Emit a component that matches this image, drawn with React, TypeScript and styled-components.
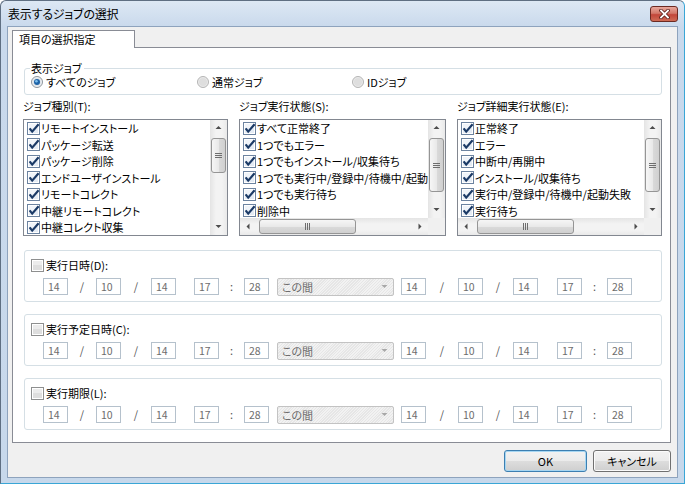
import styled, { createGlobalStyle } from 'styled-components'

const GlobalStyle = createGlobalStyle`
  html, body {
    margin: 0;
    padding: 0;
    background: #ffffff;
  }
  body {
    font-family: "Noto Sans CJK JP", "Liberation Sans", sans-serif;
    font-size: 11px;
    color: #000;
    font-feature-settings: "palt";
  }
  * {
    box-sizing: border-box;
  }
`

const Window = styled.div`
  width: 685px;
  height: 484px;
  display: flex;
  flex-direction: column;
  background: linear-gradient(180deg, #dde8f4 0%, #c9d9ec 26px, #c7d8eb 100%);
  border: 1px solid #5f6f82;
  border-right-color: #3aa6d6;
  border-bottom-color: #3aa6d6;
  border-radius: 6px 6px 0 0;
  padding: 0 6px 5px 6px;
`

const TitleBar = styled.div`
  height: 25px;
  flex: none;
  display: flex;
  justify-content: space-between;
  align-items: flex-start;
  padding-left: 1px;
`

const Title = styled.span`
  font-size: 12px;
  line-height: 25px;
  letter-spacing: -0.2px;
`

const CloseButton = styled.div`
  margin-top: 5px;
  width: 28px;
  height: 16px;
  border: 1px solid #6b2a22;
  border-radius: 3px;
  background: linear-gradient(180deg, #e8a89c 0%, #d3786a 45%, #c2463a 55%, #cf6b55 100%);
  display: flex;
  align-items: center;
  justify-content: center;
`

const Client = styled.div`
  flex: 1;
  display: flex;
  flex-direction: column;
  background: #f0f0f0;
  border: 1px solid #8ea3bd;
  padding: 3px 6px 5px 4px;
`

const TabHeader = styled.div`
  width: 123px;
  height: 18px;
  flex: none;
  background: #ffffff;
  border: 1px solid #898c95;
  border-bottom: none;
  margin-bottom: -1px;
  position: relative;
  z-index: 1;
  padding-left: 6px;
  line-height: 17px;
`

const TabPanel = styled.div`
  flex: 1;
  background: #ffffff;
  border: 1px solid #898c95;
  padding: 0 8px 0 10px;
  display: flex;
  flex-direction: column;
`

const GroupFieldset = styled.fieldset`
  margin: 13px 0 0 1px;
  height: 34px;
  border: 1px solid #d5dfe5;
  border-radius: 3px;
  padding: 0 6px 0 5px;
  min-width: 0;
`

const Legend = styled.legend`
  padding: 0 2px 0 1px;
  line-height: 14px;
  height: 14px;
`

const RadioRow = styled.div`
  display: flex;
  align-items: center;
  height: 14px;
  margin-left: 1px;
`

const RadioItem = styled.label<{ $w?: number }>`
  display: flex;
  align-items: center;
  gap: 3px;
  width: ${(p) => (p.$w ? `${p.$w}px` : 'auto')};
  line-height: 14px;
`

const ListsGrid = styled.div`
  display: grid;
  grid-template-columns: 205px 207px 205px;
  column-gap: 11px;
  margin-top: 5px;
`

const ListColumn = styled.div`
  display: flex;
  flex-direction: column;
`

const ListLabel = styled.div`
  height: 13px;
  line-height: 13px;
  margin-bottom: 6px;
`

const ListBox = styled.div<{ $hscroll?: boolean }>`
  height: 117px;
  border: 1px solid #828790;
  background: #ffffff;
  display: grid;
  grid-template-columns: minmax(0, 1fr) 17px;
  grid-template-rows: ${(p) => (p.$hscroll ? 'minmax(0, 1fr) 17px' : 'minmax(0, 1fr)')};
  overflow: hidden;
`

const Items = styled.div`
  overflow: hidden;
  padding-left: 3px;
`

const Item = styled.div`
  height: 16.5px;
  display: flex;
  align-items: center;
  gap: 1px;
  white-space: nowrap;
  line-height: 16px;
`

const VScroll = styled.div`
  display: flex;
  flex-direction: column;
  background: linear-gradient(90deg, #e4e4e4 0%, #f3f3f3 35%, #f3f3f3 70%, #e9e9e9 100%);
`

const HScroll = styled.div`
  display: flex;
  background: linear-gradient(180deg, #e4e4e4 0%, #f3f3f3 35%, #f3f3f3 70%, #e9e9e9 100%);
`

const Corner = styled.div`
  background: #f0f0f0;
`

const ArrowBtn = styled.div`
  width: 17px;
  height: 17px;
  flex: none;
  display: flex;
  align-items: center;
  justify-content: center;
`

const VTrack = styled.div`
  flex: 1;
  display: flex;
  flex-direction: column;
  padding: 0 1px;
`

const HTrack = styled.div`
  flex: 1;
  display: flex;
  padding: 1px 0;
`

const VThumb = styled.div<{ $offset: number; $size: number }>`
  margin-top: ${(p) => p.$offset}px;
  height: ${(p) => p.$size}px;
  border: 1px solid #959595;
  border-radius: 3px;
  background: linear-gradient(90deg, #f6f6f6 0%, #e9e9e9 50%, #dadada 51%, #d0d0d0 100%);
  display: flex;
  align-items: center;
  justify-content: center;
`

const HThumb = styled.div<{ $offset: number; $size: number }>`
  margin-left: ${(p) => p.$offset}px;
  width: ${(p) => p.$size}px;
  border: 1px solid #959595;
  border-radius: 3px;
  background: linear-gradient(180deg, #f6f6f6 0%, #e9e9e9 50%, #dadada 51%, #d0d0d0 100%);
  display: flex;
  align-items: center;
  justify-content: center;
`

const DateGroup = styled.div<{ $first?: boolean }>`
  margin: ${(p) => (p.$first ? '14px' : '12px')} 0 0 1px;
  height: 52px;
  border: 1px solid #d5dfe5;
  border-radius: 3px;
  padding: 7px 6px 0 6px;
`

const CheckLabel = styled.label`
  display: flex;
  align-items: center;
  gap: 2px;
  height: 14px;
  line-height: 14px;
`

const DateRow = styled.div`
  display: flex;
  align-items: center;
  margin: 6px 0 0 12px;
  height: 17px;
`

const Field = styled.div`
  width: 25px;
  height: 17px;
  flex: none;
  border: 1px solid #b5c1cc;
  background: #ffffff;
  color: #6d6d6d;
  padding-left: 4px;
  line-height: 15px;
  font-size: 10.5px;
`

const Sep = styled.span<{ $w: number }>`
  width: ${(p) => p.$w}px;
  flex: none;
  text-align: center;
  color: #555;
  line-height: 17px;
`

const Combo = styled.div`
  width: 117px;
  height: 18px;
  flex: none;
  margin: 0 7px 0 8px;
  border: 1px solid #c3c3c3;
  border-radius: 2px;
  background: repeating-linear-gradient(135deg, #f2f2f2 0px, #f2f2f2 1px, #e6e6e6 1px, #e6e6e6 2px);
  color: #6d6d6d;
  display: flex;
  align-items: center;
  justify-content: space-between;
  padding: 0 5px 0 4px;
  line-height: 16px;
`

const Footer = styled.div`
  flex: none;
  display: flex;
  justify-content: flex-end;
  gap: 6px;
  margin-top: 7px;
  padding-right: 0;
`

const Button = styled.div<{ $default?: boolean; $w: number }>`
  width: ${(p) => p.$w}px;
  height: 22px;
  border: 1px solid ${(p) => (p.$default ? '#3c7fb1' : '#707070')};
  border-radius: 3px;
  background: linear-gradient(180deg, #f2f2f2 0%, #ebebeb 50%, #dddddd 51%, #cfcfcf 100%);
  box-shadow: inset 0 0 0 1px ${(p) => (p.$default ? '#a6d6f2' : '#fbfbfb')};
  display: flex;
  align-items: center;
  justify-content: center;
  line-height: 20px;
`

function CheckBox({ checked }: { checked?: boolean }) {
  return (
    <svg width="13" height="13" viewBox="0 0 13 13" style={{ flex: 'none' }}>
      <rect x="0.5" y="0.5" width="12" height="12" fill="#ffffff" stroke={checked ? '#6c83a0' : '#8e8f8f'} />
      <rect x="2" y="2" width="9" height="9" fill={checked ? '#e4ebf4' : '#dedede'} />
      <rect x="2" y="2" width="9" height="4" fill={checked ? '#f0f4f9' : '#ececec'} />
      {checked && (
        <path d="M2.6 6.4 L5.2 9.6 L11.6 2.2" fill="none" stroke="#1b3a66" strokeWidth="2.2" strokeLinejoin="miter" />
      )}
    </svg>
  )
}

function Radio({ selected }: { selected?: boolean }) {
  return (
    <svg width="12" height="12" viewBox="0 0 12 12" style={{ flex: 'none' }}>
      <circle cx="6" cy="6" r="5.5" fill={selected ? '#eef1f4' : '#ebebeb'} stroke={selected ? '#8e959c' : '#b4b4b4'} />
      <circle cx="6" cy="6" r="4" fill={selected ? '#dfe3e8' : '#dedede'} />
      {selected && (
        <>
          <circle cx="6" cy="6" r="3" fill="#1d63a8" />
          <circle cx="5.4" cy="5.3" r="1.3" fill="#7fc1ef" />
        </>
      )}
    </svg>
  )
}

function Arrow({ dir, color = '#4d4d4d' }: { dir: 'up' | 'down' | 'left' | 'right'; color?: string }) {
  const d = {
    up: 'M0.5 4 L3.5 1 L6.5 4 Z',
    down: 'M0.5 2 L3.5 5 L6.5 2 Z',
    left: 'M4.5 0.5 L1.5 3.5 L4.5 6.5 Z',
    right: 'M2.5 0.5 L5.5 3.5 L2.5 6.5 Z',
  }[dir]
  return (
    <svg width="7" height="7" viewBox="0 0 7 7">
      <path d={d} fill={color} />
    </svg>
  )
}

function Grip({ vertical }: { vertical?: boolean }) {
  return vertical ? (
    <svg width="7" height="7" viewBox="0 0 7 7">
      <path d="M0 1.5 H7 M0 3.5 H7 M0 5.5 H7" stroke="#6e6e6e" strokeWidth="1" />
    </svg>
  ) : (
    <svg width="7" height="7" viewBox="0 0 7 7">
      <path d="M1.5 0 V7 M3.5 0 V7 M5.5 0 V7" stroke="#6e6e6e" strokeWidth="1" />
    </svg>
  )
}

function VerticalScrollbar({ offset, size }: { offset: number; size: number }) {
  return (
    <VScroll>
      <ArrowBtn>
        <Arrow dir="up" />
      </ArrowBtn>
      <VTrack>
        <VThumb $offset={offset} $size={size}>
          <Grip vertical />
        </VThumb>
      </VTrack>
      <ArrowBtn>
        <Arrow dir="down" />
      </ArrowBtn>
    </VScroll>
  )
}

function JobList({ items, hscroll, thumb }: { items: string[]; hscroll?: boolean; thumb: [number, number] }) {
  return (
    <ListBox $hscroll={hscroll}>
      <Items>
        {items.map((label) => (
          <Item key={label}>
            <CheckBox checked />
            {label}
          </Item>
        ))}
      </Items>
      <VerticalScrollbar offset={thumb[0]} size={thumb[1]} />
      {hscroll && (
        <>
          <HScroll>
            <ArrowBtn>
              <Arrow dir="left" />
            </ArrowBtn>
            <HTrack>
              <HThumb $offset={2} $size={97}>
                <Grip />
              </HThumb>
            </HTrack>
            <ArrowBtn>
              <Arrow dir="right" />
            </ArrowBtn>
          </HScroll>
          <Corner />
        </>
      )}
    </ListBox>
  )
}

function DateFilter({ label, first }: { label: string; first?: boolean }) {
  return (
    <DateGroup $first={first}>
      <CheckLabel>
        <CheckBox />
        {label}
      </CheckLabel>
      <DateRow>
        <Field>14</Field>
        <Sep $w={28}>/</Sep>
        <Field>10</Field>
        <Sep $w={30}>/</Sep>
        <Field>14</Field>
        <Sep $w={18} />
        <Field>17</Field>
        <Sep $w={25}>:</Sep>
        <Field>28</Field>
        <Combo>
          この間
          <Arrow dir="down" color="#a8a8a8" />
        </Combo>
        <Field>14</Field>
        <Sep $w={32}>/</Sep>
        <Field>10</Field>
        <Sep $w={30}>/</Sep>
        <Field>14</Field>
        <Sep $w={19} />
        <Field>17</Field>
        <Sep $w={25}>:</Sep>
        <Field>28</Field>
      </DateRow>
    </DateGroup>
  )
}

const jobTypes = [
  'リモートインストール',
  'パッケージ転送',
  'パッケージ削除',
  'エンドユーザインストール',
  'リモートコレクト',
  '中継リモートコレクト',
  '中継コレクト収集',
]

const jobStates = [
  'すべて正常終了',
  '1つでもエラー',
  '1つでもインストール/収集待ち',
  '1つでも実行中/登録中/待機中/起動失敗',
  '1つでも実行待ち',
  '削除中',
]

const detailStates = [
  '正常終了',
  'エラー',
  '中断中/再開中',
  'インストール/収集待ち',
  '実行中/登録中/待機中/起動失敗',
  '実行待ち',
]

export default function App() {
  return (
    <>
      <GlobalStyle />
      <Window>
        <TitleBar>
          <Title>表示するジョブの選択</Title>
          <CloseButton>
            <svg width="11" height="10" viewBox="0 0 11 10">
              <path d="M2 1.5 L9 8.5 M9 1.5 L2 8.5" stroke="#5a1d16" strokeWidth="3.4" strokeLinecap="square" />
              <path d="M2 1.5 L9 8.5 M9 1.5 L2 8.5" stroke="#ffffff" strokeWidth="1.8" strokeLinecap="square" />
            </svg>
          </CloseButton>
        </TitleBar>
        <Client>
          <TabHeader>項目の選択指定</TabHeader>
          <TabPanel>
            <GroupFieldset>
              <Legend>表示ジョブ</Legend>
              <RadioRow>
                <RadioItem $w={166}>
                  <Radio selected />
                  すべてのジョブ
                </RadioItem>
                <RadioItem $w={155}>
                  <Radio />
                  通常ジョブ
                </RadioItem>
                <RadioItem>
                  <Radio />
                  IDジョブ
                </RadioItem>
              </RadioRow>
            </GroupFieldset>
            <ListsGrid>
              <ListColumn>
                <ListLabel>ジョブ種別(T):</ListLabel>
                <JobList items={jobTypes} thumb={[1, 35]} />
              </ListColumn>
              <ListColumn>
                <ListLabel>ジョブ実行状態(S):</ListLabel>
                <JobList items={jobStates} hscroll thumb={[1, 54]} />
              </ListColumn>
              <ListColumn>
                <ListLabel>ジョブ詳細実行状態(E):</ListLabel>
                <JobList items={detailStates} hscroll thumb={[1, 54]} />
              </ListColumn>
            </ListsGrid>
            <DateFilter label="実行日時(D):" first />
            <DateFilter label="実行予定日時(C):" />
            <DateFilter label="実行期限(L):" />
          </TabPanel>
          <Footer>
            <Button $default $w={83}>
              OK
            </Button>
            <Button $w={78}>キャンセル</Button>
          </Footer>
        </Client>
      </Window>
    </>
  )
}
